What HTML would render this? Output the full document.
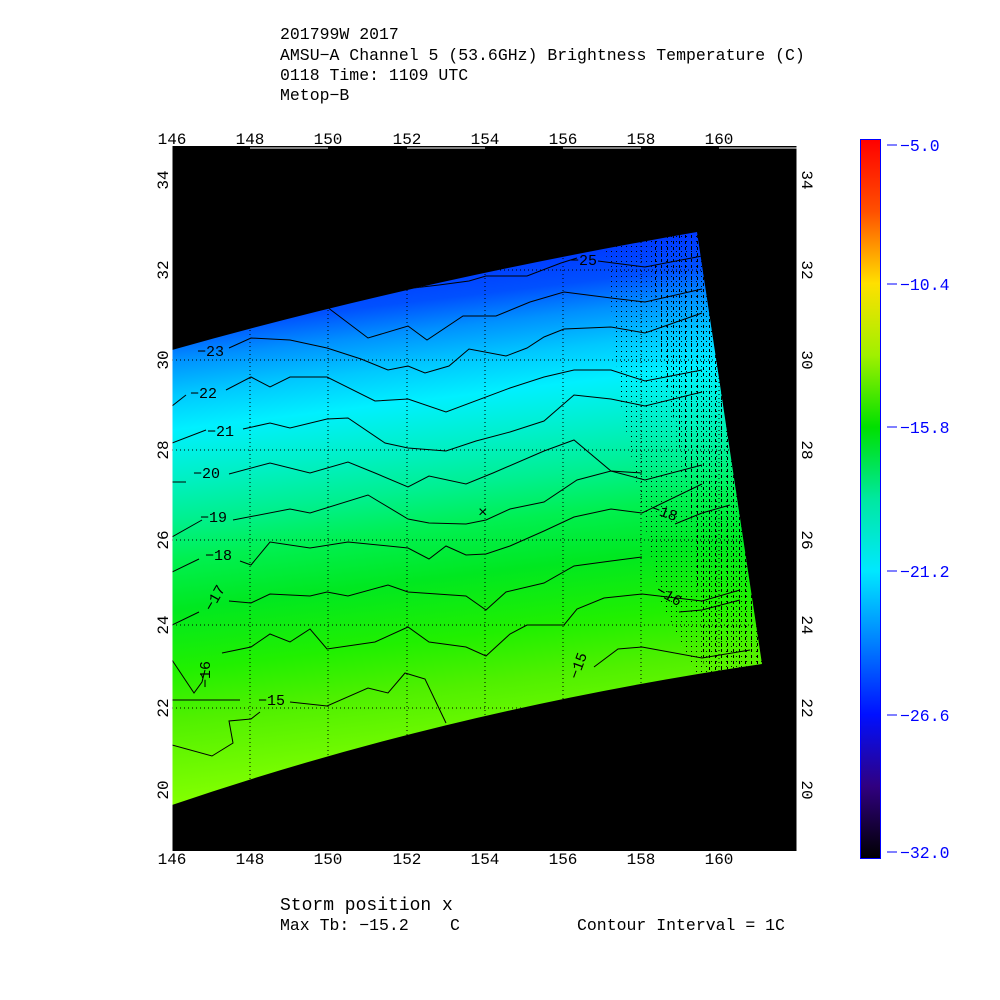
<!DOCTYPE html>
<html><head><style>
html,body{margin:0;padding:0;background:#fff;}
svg{display:block;}
text{font-family:"Liberation Mono",monospace;}
</style></head><body>
<svg width="1000" height="1000" viewBox="0 0 1000 1000" xmlns="http://www.w3.org/2000/svg">
<defs>
<linearGradient id="sw" gradientUnits="userSpaceOnUse" x1="0" y1="260" x2="0" y2="800" gradientTransform="translate(0,20.6) skewY(-6.8)">
<stop offset="0" stop-color="#0020ff"/>
<stop offset="0.13" stop-color="#0050ff"/>
<stop offset="0.185" stop-color="#0090ff"/>
<stop offset="0.25" stop-color="#00c8ff"/>
<stop offset="0.315" stop-color="#00f0ff"/>
<stop offset="0.4" stop-color="#00f0c8"/>
<stop offset="0.48" stop-color="#00f090"/>
<stop offset="0.556" stop-color="#00f050"/>
<stop offset="0.648" stop-color="#00e820"/>
<stop offset="0.76" stop-color="#20f000"/>
<stop offset="0.852" stop-color="#50f000"/>
<stop offset="1" stop-color="#80ff00"/>
</linearGradient>
<linearGradient id="cb" x1="0" y1="0" x2="0" y2="1">
<stop offset="0" stop-color="#ff0000"/>
<stop offset="0.1" stop-color="#ff5000"/>
<stop offset="0.2" stop-color="#ffe000"/>
<stop offset="0.3" stop-color="#a0f000"/>
<stop offset="0.4" stop-color="#00e000"/>
<stop offset="0.5" stop-color="#00e8a0"/>
<stop offset="0.6" stop-color="#00e8ff"/>
<stop offset="0.7" stop-color="#0080ff"/>
<stop offset="0.8" stop-color="#0010ff"/>
<stop offset="0.9" stop-color="#300080"/>
<stop offset="1" stop-color="#000000"/>
</linearGradient>
<clipPath id="cp"><path d="M172,350 Q420,280 697,232 L762,664 Q450,710 172,805 Z"/></clipPath>
<pattern id="ht" width="6" height="6" patternUnits="userSpaceOnUse"><rect x="1" y="1" width="1" height="3" fill="#000"/></pattern>
<pattern id="dt" width="5" height="5" patternUnits="userSpaceOnUse"><rect x="1" y="1" width="1" height="1" fill="#000"/></pattern>
</defs>
<rect x="172" y="146" width="625" height="705" fill="#000"/>
<path d="M172,350 Q420,280 697,232 L762,664 Q450,710 172,805 Z" fill="url(#sw)"/>
<g clip-path="url(#cp)">
<polygon points="605,240 720,220 780,680 700,680 660,600 620,400" fill="url(#dt)"/>
<polygon points="650,230 720,220 780,680 705,680 690,500 660,350" fill="url(#ht)"/>
<g stroke="#000" stroke-width="1" stroke-dasharray="1,3">
<line x1="250" y1="146" x2="250" y2="851"/><line x1="328" y1="146" x2="328" y2="851"/>
<line x1="407" y1="146" x2="407" y2="851"/><line x1="485" y1="146" x2="485" y2="851"/>
<line x1="563" y1="146" x2="563" y2="851"/><line x1="641" y1="146" x2="641" y2="851"/>
<line x1="719" y1="146" x2="719" y2="851"/>
<line x1="172" y1="270" x2="797" y2="270"/><line x1="172" y1="360" x2="797" y2="360"/>
<line x1="172" y1="450" x2="797" y2="450"/><line x1="172" y1="540" x2="797" y2="540"/>
<line x1="172" y1="625" x2="797" y2="625"/><line x1="172" y1="708" x2="797" y2="708"/>
</g>
<g stroke="#000" fill="none" stroke-width="1">
<polyline points="405,289 439,285 469,281 486,276 527,276 561,263 577,258"/>
<polyline points="598,261 645,267 702,256"/>
<polyline points="327,307 368,338 408,326 427,340 463,316 496,316 530,302 564,292 611,298 645,302 702,289"/>
<polyline points="229,348 251,338 290,340 327,348 361,359 388,370 408,366 425,373 449,366 469,349 506,356 527,348 544,337 564,329 611,327 645,333 702,313"/>
<polyline points="172,406 186,395"/>
<polyline points="226,390 251,377 270,387 290,377 327,377 375,401 408,399 446,412 510,388 544,377 574,370 611,370 645,381 702,370"/>
<polyline points="172,443 206,430"/>
<polyline points="243,429 270,423 290,428 327,419 348,418 385,443 408,448 446,451 476,441 510,432 544,421 574,395 611,399 645,406 702,392"/>
<polyline points="172,482 186,482"/>
<polyline points="229,474 270,463 310,473 348,462 375,473 408,487 429,476 466,484 493,473 544,451 574,440 611,471 645,480 702,465"/>
<polyline points="172,537 202,520"/>
<polyline points="233,520 290,509 310,513 368,495 408,519 429,523 466,524 486,520 510,509 544,502 577,480 611,471 642,473"/>
<polyline points="675,524 702,513 730,505"/>
<polyline points="172,572 199,559"/>
<polyline points="240,561 251,565 270,542 310,548 348,542 408,548 429,559 446,546 466,555 486,554 510,546 544,531 574,517 611,509 642,513 702,484"/>
<polyline points="172,625 199,612"/>
<polyline points="229,601 251,603 270,594 310,596 327,592 348,596 388,585 408,592 466,596 486,610 506,592 544,583 574,566 611,561 642,557"/>
<polyline points="679,612 702,610 740,600"/>
<polyline points="222,653 251,647 270,634 290,642 310,629 327,649 375,642 408,627 429,642 466,647 486,656 510,634 527,625 564,625 577,609 604,598 642,594 702,601 740,590"/>
<polyline points="172,660 194,693 202,682 205,670"/>
<polyline points="172,700 240,700"/>
<polyline points="290,702 327,706 368,688 388,693 405,673 425,679 446,723"/>
<polyline points="594,667 618,649 642,647 702,658 750,650"/>
<polyline points="172,745 212,756 233,743 229,721 251,719 260,712"/>
</g>
</g>
<g font-size="15" fill="#000">
<text x="197" y="356">−23</text><text x="190" y="398">−22</text><text x="207" y="436">−21</text>
<text x="193" y="478">−20</text><text x="200" y="522">−19</text><text x="205" y="560">−18</text>
<text transform="translate(212,612) rotate(-60)">−17</text>
<text transform="translate(210,688) rotate(-90)">−16</text>
<text x="258" y="705">−15</text><text x="570" y="265">−25</text>
<text transform="translate(650,512) rotate(20)">−18</text>
<text transform="translate(655,593) rotate(30)">−16</text>
<text transform="translate(578,680) rotate(-70)">−15</text>
</g>
<text x="478" y="517" font-size="16" fill="#000">×</text>
<g stroke="#fff" stroke-width="1" fill="none">
<line x1="172" y1="146" x2="172" y2="851"/><line x1="797" y1="146" x2="797" y2="851"/>
<line x1="250" y1="148" x2="328" y2="148"/><line x1="407" y1="148" x2="485" y2="148"/>
<line x1="563" y1="148" x2="641" y2="148"/><line x1="719" y1="148" x2="797" y2="148"/>
</g>
<g font-size="16" fill="#000" text-anchor="middle">
<text x="172" y="144">146</text><text x="250" y="144">148</text><text x="328" y="144">150</text>
<text x="407" y="144">152</text><text x="485" y="144">154</text><text x="563" y="144">156</text>
<text x="641" y="144">158</text><text x="719" y="144">160</text>
<text x="172" y="864">146</text><text x="250" y="864">148</text><text x="328" y="864">150</text>
<text x="407" y="864">152</text><text x="485" y="864">154</text><text x="563" y="864">156</text>
<text x="641" y="864">158</text><text x="719" y="864">160</text>
</g>
<g font-size="16" fill="#000" text-anchor="middle">
<text transform="translate(168,180) rotate(-90)">34</text><text transform="translate(168,270) rotate(-90)">32</text>
<text transform="translate(168,360) rotate(-90)">30</text><text transform="translate(168,450) rotate(-90)">28</text>
<text transform="translate(168,540) rotate(-90)">26</text><text transform="translate(168,625) rotate(-90)">24</text>
<text transform="translate(168,708) rotate(-90)">22</text><text transform="translate(168,790) rotate(-90)">20</text>
<text transform="translate(802,180) rotate(90)">34</text><text transform="translate(802,270) rotate(90)">32</text>
<text transform="translate(802,360) rotate(90)">30</text><text transform="translate(802,450) rotate(90)">28</text>
<text transform="translate(802,540) rotate(90)">26</text><text transform="translate(802,625) rotate(90)">24</text>
<text transform="translate(802,708) rotate(90)">22</text><text transform="translate(802,790) rotate(90)">20</text>
</g>
<g font-size="16.5" fill="#000">
<text x="280" y="39">201799W 2017</text>
<text x="280" y="60">AMSU−A Channel 5 (53.6GHz) Brightness Temperature (C)</text>
<text x="280" y="80">0118 Time: 1109 UTC</text>
<text x="280" y="100">Metop−B</text>
<text x="280" y="910" font-size="18">Storm position x</text>
<text x="280" y="930">Max Tb: −15.2</text>
<text x="450" y="930">C</text>
<text x="577" y="930">Contour Interval = 1C</text>
</g>
<rect x="860.5" y="139.5" width="20" height="719" fill="url(#cb)" stroke="#00f" stroke-width="1"/>
<g stroke="#00f" stroke-width="1">
<line x1="887" y1="145" x2="897" y2="145"/><line x1="887" y1="284" x2="897" y2="284"/>
<line x1="887" y1="427" x2="897" y2="427"/><line x1="887" y1="571" x2="897" y2="571"/>
<line x1="887" y1="715" x2="897" y2="715"/><line x1="887" y1="852" x2="897" y2="852"/>
</g>
<g font-size="16.5" fill="#00f">
<text x="900" y="151">−5.0</text><text x="900" y="290">−10.4</text><text x="900" y="433">−15.8</text>
<text x="900" y="577">−21.2</text><text x="900" y="721">−26.6</text><text x="900" y="858">−32.0</text>
</g>
</svg>
</body></html>
